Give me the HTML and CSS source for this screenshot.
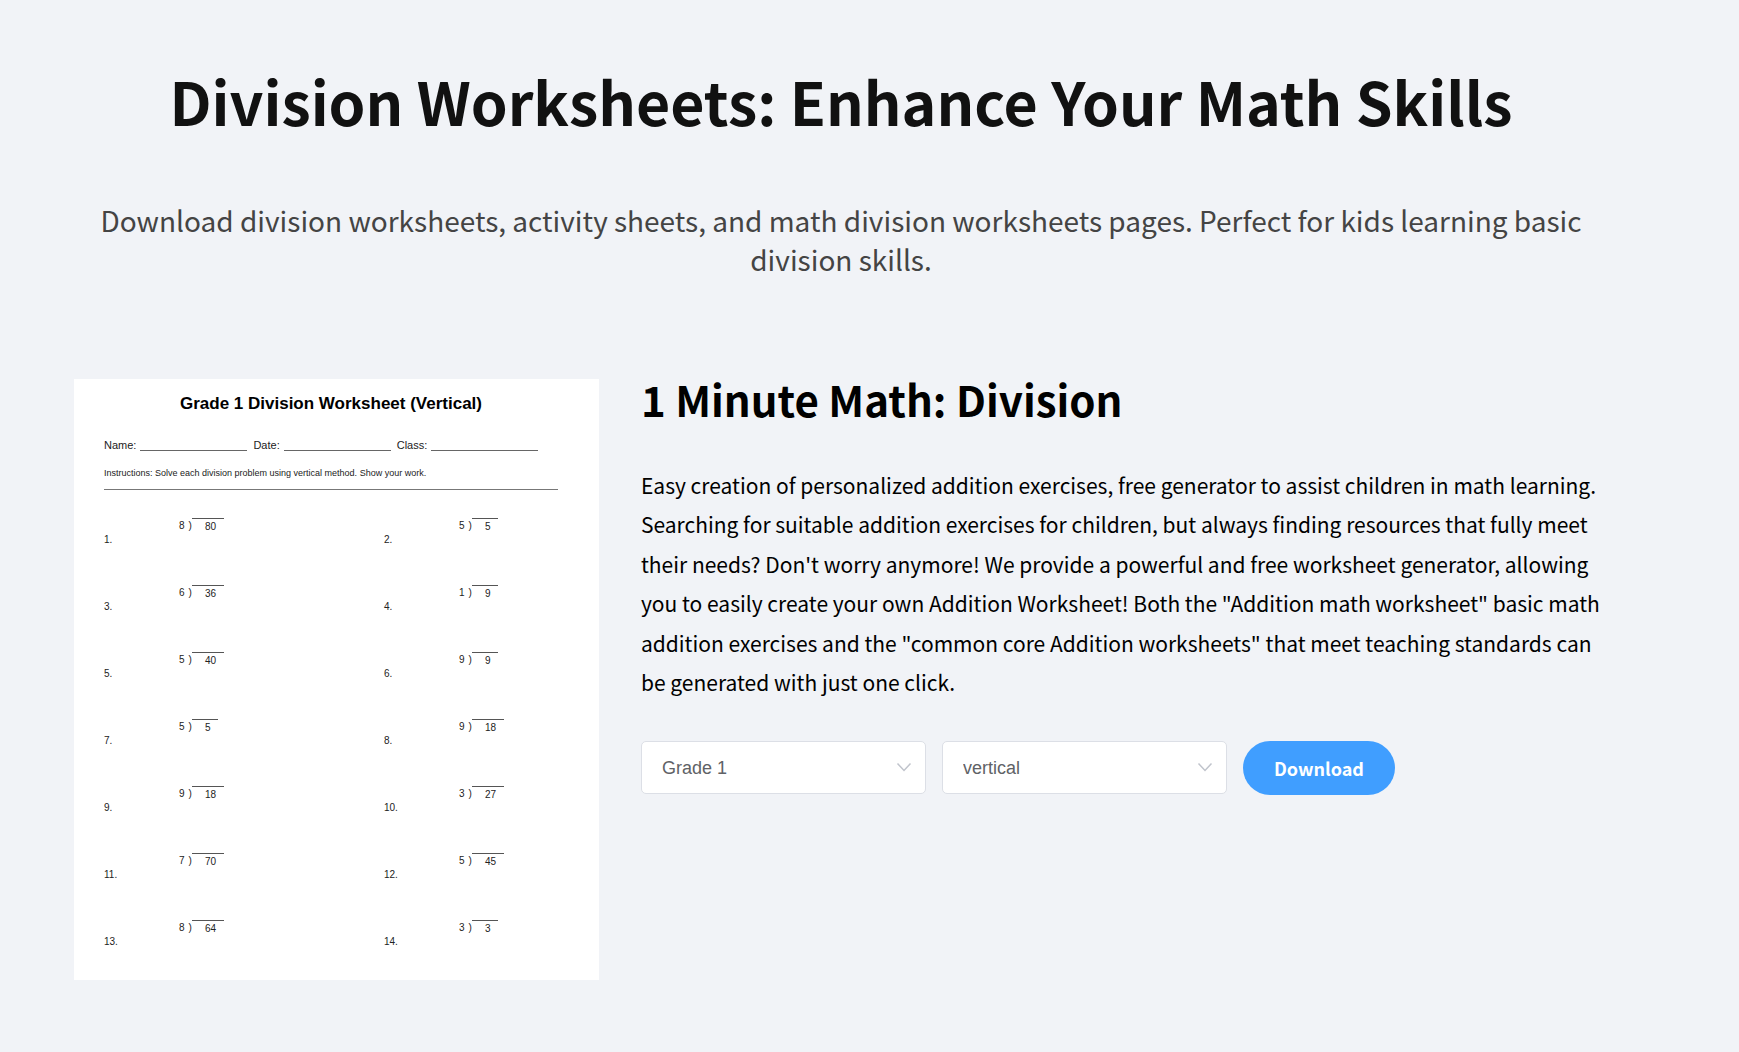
FILE: index.html
```html
<!doctype html>
<html lang="en">
  <head>
    <meta charset="utf-8" />
    <title>Division Worksheets</title>
    <link rel="stylesheet" href="styles.css">
  </head>

  <body>
    <main class="page">
      <header class="intro">
        <h1>Division Worksheets: Enhance Your Math Skills</h1>
        <p>
          Download division worksheets, activity sheets, and math division
          worksheets pages. Perfect for kids learning basic division skills.
        </p>
      </header>

      <div class="generator">
        <!-- Worksheet preview -->
        <section class="sheet">
          <h3>Grade 1 Division Worksheet (Vertical)</h3>
          <div class="fields">
            <span>Name:</span><span class="blank"></span>
            <span>Date:</span><span class="blank"></span>
            <span>Class:</span><span class="blank"></span>
          </div>
          <p class="instructions">
            Instructions: Solve each division problem using vertical method. Show your work.
          </p>
          <div class="problems">
            <div class="problem"><span class="index">1.</span><span>8</span><span class="paren">)</span><span class="dividend">80</span></div>
            <div class="problem"><span class="index">2.</span><span>5</span><span class="paren">)</span><span class="dividend">5</span></div>
            <div class="problem"><span class="index">3.</span><span>6</span><span class="paren">)</span><span class="dividend">36</span></div>
            <div class="problem"><span class="index">4.</span><span>1</span><span class="paren">)</span><span class="dividend">9</span></div>
            <div class="problem"><span class="index">5.</span><span>5</span><span class="paren">)</span><span class="dividend">40</span></div>
            <div class="problem"><span class="index">6.</span><span>9</span><span class="paren">)</span><span class="dividend">9</span></div>
            <div class="problem"><span class="index">7.</span><span>5</span><span class="paren">)</span><span class="dividend">5</span></div>
            <div class="problem"><span class="index">8.</span><span>9</span><span class="paren">)</span><span class="dividend">18</span></div>
            <div class="problem"><span class="index">9.</span><span>9</span><span class="paren">)</span><span class="dividend">18</span></div>
            <div class="problem"><span class="index">10.</span><span>3</span><span class="paren">)</span><span class="dividend">27</span></div>
            <div class="problem"><span class="index">11.</span><span>7</span><span class="paren">)</span><span class="dividend">70</span></div>
            <div class="problem"><span class="index">12.</span><span>5</span><span class="paren">)</span><span class="dividend">45</span></div>
            <div class="problem"><span class="index">13.</span><span>8</span><span class="paren">)</span><span class="dividend">64</span></div>
            <div class="problem"><span class="index">14.</span><span>3</span><span class="paren">)</span><span class="dividend">3</span></div>
          </div>
        </section>

        <section class="details">
          <h2>1 Minute Math: Division</h2>
          <p>
            Easy creation of personalized addition exercises, free generator to
            assist children in math learning. Searching for suitable addition
            exercises for children, but always finding resources that fully meet
            their needs? Don't worry anymore! We provide a powerful and free
            worksheet generator, allowing you to easily create your own Addition
            Worksheet! Both the "Addition math worksheet" basic math addition
            exercises and the "common core Addition worksheets" that meet
            teaching standards can be generated with just one click.
          </p>

          <form class="controls">
            <label class="select">
              <select aria-label="Grade">
                <option>Grade 1</option>
              </select>
              <svg viewBox="0 0 16 16" aria-hidden="true"><path d="M1.5 4.5 8 11.5l6.5-7" /></svg>
            </label>
            <label class="select">
              <select aria-label="Layout">
                <option>vertical</option>
              </select>
              <svg viewBox="0 0 16 16" aria-hidden="true"><path d="M1.5 4.5 8 11.5l6.5-7" /></svg>
            </label>
            <button type="button">Download</button>
          </form>
        </section>
      </div>
    </main>
  </body>
</html>
```

FILE: styles.css
```css
* {
  box-sizing: border-box;
}

body {
  margin: 0;
  background-color: #f1f3f7;
  color: #000;
  font-family: "Noto Sans CJK SC", sans-serif;
}

h1,
h2,
h3,
p {
  margin: 0;
}

.page {
  padding: 61px 131px 72px 74px;
}

.intro {
  text-align: center;
}

.intro h1 {
  color: #111;
  font-size: 59px;
  line-height: 80px;
}

.intro p {
  margin-top: 60px;
  padding: 0 20px;
  color: #444;
  font-size: 28px;
  line-height: 39px;
}

.generator {
  display: grid;
  grid-template-columns: 19fr 35fr;
  gap: 42px;
  align-items: start;
  margin-top: 100px;
}

/* Worksheet preview */
.sheet {
  padding: 15px 41px 28px 30px;
  background-color: #fff;
  color: #222;
  font-family: "Liberation Sans", Arial, sans-serif;
  font-size: 10px;
}

.sheet h3 {
  color: #000;
  font-size: 17px;
  line-height: 20px;
  text-align: center;
}

.fields {
  display: flex;
  margin-top: 25px;
  font-size: 11px;
  line-height: 12px;
}

.blank {
  width: 107px;
  margin: 0 6px 0 4px;
  border-bottom: 1px solid #666;
}

.instructions {
  margin-top: 16px;
  padding-bottom: 10px;
  border-bottom: 1px solid #777;
  font-size: 9px;
  line-height: 12px;
}

.problems {
  display: grid;
  grid-template-columns: 280px 1fr;
  grid-auto-rows: 32px;
  row-gap: 35px;
  margin-top: 28px;
}

.problem {
  display: flex;
  align-items: flex-start;
  line-height: 16px;
}

.index {
  width: 75px;
  padding-top: 14px;
}

.paren {
  margin-left: 4px;
}

.dividend {
  padding: 0 8px 0 13px;
  border-top: 1px solid #555;
}

/* Description and controls */
.details h2 {
  font-size: 42px;
  line-height: 40px;
}

.details p {
  margin-top: 47px;
  font-size: 21px;
  line-height: 1.875;
}

.controls {
  display: flex;
  flex-wrap: wrap;
  align-items: flex-start;
  gap: 16px;
  margin-top: 39px;
}

.select {
  position: relative;
  width: 285px;
}

.select select {
  width: 100%;
  height: 53px;
  padding: 0 20px;
  appearance: none;
  background-color: #fff;
  border: 1px solid #dcdfe6;
  border-radius: 5px;
  color: #606266;
  font-family: "Liberation Sans", Arial, sans-serif;
  font-size: 18px;
}

.select svg {
  position: absolute;
  top: 18px;
  right: 14px;
  width: 16px;
  height: 16px;
  fill: none;
  stroke: #c0c4cc;
  stroke-width: 1.5;
  pointer-events: none;
}

button {
  height: 54px;
  padding: 0 31px;
  background-color: #409eff;
  border: none;
  border-radius: 27px;
  color: #fff;
  font-family: inherit;
  font-size: 18px;
  font-weight: 700;
  cursor: pointer;
}
```
